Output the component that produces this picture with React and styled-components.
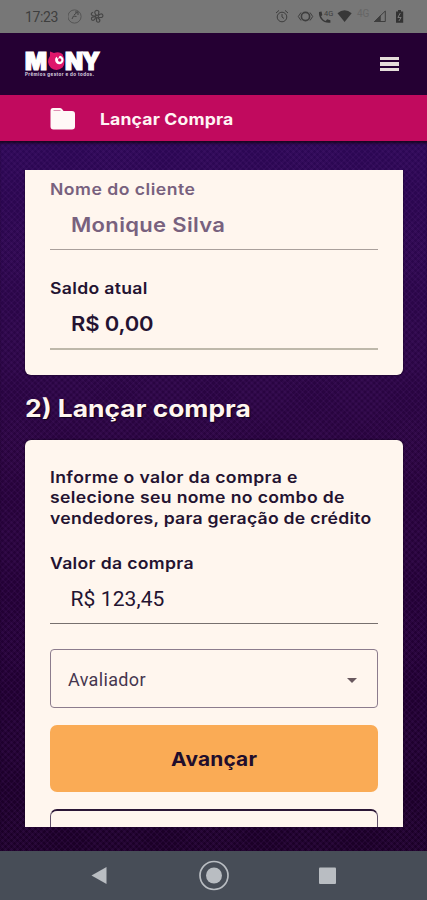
import React from 'react'
import styled, { createGlobalStyle } from 'styled-components'

const GlobalStyle = createGlobalStyle`
  * {
    box-sizing: border-box;
  }

  body {
    margin: 0;
    font-family: Inter, 'Open Sans', sans-serif;
  }
`

const Screen = styled.div`
  display: flex;
  flex-direction: column;
  width: 427px;
  height: 900px;
  overflow: hidden;
`

const StatusBar = styled.div`
  display: flex;
  flex: none;
  align-items: center;
  height: 33px;
  background: #777;
`

const Clock = styled.span`
  width: 43px;
  margin-left: 25px;
  color: #3e3e3e;
  font: 400 14px/18px Roboto, sans-serif;
  letter-spacing: -0.35px;
`

const StatusIcons = styled.svg`
  display: block;
  flex: none;
  width: ${({ $width }) => $width}px;
  height: 33px;
  margin-left: ${({ $left }) => $left || 0}px;
`

const Header = styled.header`
  display: flex;
  flex: none;
  align-items: center;
  justify-content: space-between;
  height: 62px;
  padding: 0 28px 0 24px;
  background: #250033;
`

const Logo = styled.svg`
  display: block;
  width: 80px;
  height: 32px;
`

const MenuButton = styled.button`
  display: flex;
  flex-direction: column;
  gap: 2px;
  padding: 0;
  border: 0;
  background: none;
`

const MenuLine = styled.span`
  width: 19px;
  height: 3.5px;
  background: #e5ddda;
`

const TitleBar = styled.div`
  display: flex;
  flex: none;
  align-items: center;
  gap: 25px;
  height: 46px;
  padding: 2px 0 0 50px;
  background: #c10a5e;
  color: #fff4f4;
`

// Inter is narrower than the brand face, so its glyphs are widened
const Wide = styled.span`
  display: ${({ $inline }) => ($inline ? 'inline-block' : 'block')};
  transform: scaleX(1.1);
  transform-origin: ${({ $inline }) => ($inline ? 'center' : 'left')};
  letter-spacing: ${({ $spacing }) => $spacing || 0}px;
  white-space: nowrap;
`

const PageTitle = styled.h1`
  margin: 0;
  font-size: 16px;
  line-height: 22px;
  font-weight: 700;
`

const Content = styled.main`
  flex: none;
  height: 710px;
  padding: 28.5px 23px 24px 24px;
  background:
    repeating-linear-gradient(45deg, rgba(120, 60, 160, 0.08) 0 1.8px, transparent 1.8px 4.2px),
    repeating-linear-gradient(-45deg, rgba(120, 60, 160, 0.08) 0 1.8px, transparent 1.8px 4.2px),
    linear-gradient(#2c0755 0%, #2b0649 22%, #28033c 45%, #220034 70%, #1b0027 100%);
  box-shadow: inset 0 3px 3px -1px #17051e;
`

const Scroll = styled.div`
  height: 657px;
  padding: 0 1px;
  overflow: hidden;
`

const Card = styled.section`
  padding: ${({ $top }) => $top}px 25px 0;
  height: ${({ $height }) => $height}px;
  border-radius: ${({ $clipped }) => ($clipped ? '0 0 6px 6px' : '6px 6px 0 0')};
  background: #fff6ee;
  box-shadow: 0 0 2px #0c0014;
  color: #241331;
`

const Label = styled.div`
  color: ${({ $muted }) => ($muted ? '#78617e' : '#241331')};
  font-size: 16px;
  line-height: 20px;
  font-weight: 600;
`

const Value = styled.div`
  height: ${({ $height }) => $height}px;
  margin-bottom: ${({ $after }) => $after}px;
  padding: ${({ $top }) => $top}px 0 0 20.5px;
  border-bottom: ${({ $line }) => $line};
  color: ${({ $muted }) => ($muted ? '#78617e' : '#241331')};
  font-size: 20px;
  line-height: 26px;
  font-weight: 600;
`

const Amount = styled(Value)`
  font-family: Roboto, sans-serif;
  font-size: 21px;
  font-weight: 400;
  letter-spacing: 0.1px;
`

const SectionTitle = styled.h2`
  height: 65px;
  margin: 0;
  padding-top: 19px;
  color: #fff6f0;
  font-size: 24px;
  line-height: 30px;
  font-weight: 700;
  text-shadow: 1px 1px 1px #12001c;
`

const Intro = styled.p`
  margin: 0 0 25px;
  font-size: 16px;
  line-height: 20.5px;
  font-weight: 600;
`

const Select = styled.div`
  display: flex;
  align-items: center;
  justify-content: space-between;
  height: 59px;
  margin-bottom: 17px;
  padding: 3px 20px 0 17px;
  border: 1px solid #8c7c8d;
  border-radius: 4px;
  color: #46364e;
  font: 400 18px/24px Roboto, sans-serif;
  letter-spacing: 0.35px;
`

const Submit = styled.button`
  display: block;
  width: 100%;
  height: 67px;
  margin-bottom: 17px;
  padding: 3px 0 0;
  border: 0;
  border-radius: 7px;
  background: #faab55;
  color: #210d2c;
  font: 700 19px/26px Inter, sans-serif;
`

const Secondary = styled.div`
  height: 60px;
  border: 1px solid #62516a;
  border-top: 2px solid #2b1636;
  border-radius: 7px;
`

const NavBar = styled.nav`
  display: flex;
  flex: none;
  height: 49px;
  background: #474d57;
`

const App = () => {
  return (
    <Screen>
      <GlobalStyle />
      <StatusBar>
        <Clock>17:23</Clock>
        <StatusIcons $width={38} viewBox="0 0 38 33" fill="none" stroke="#454545" strokeWidth="1">
          <circle cx="6.5" cy="16.5" r="6.6" stroke="#555" />
          <path d="M4 19l1.500-3 3 .5M6 15l3.500-3M7 12h3v3" />
          <g transform="translate(29 16.5) scale(.95)" strokeWidth="1.2">
            <circle r="1.5" />
            <path d="M-1-1.500C-5-6 1-8 2-5L1.500-1.500M1.500-1C5-5 8-1 5 1L1.500 1M1 1.500C5 4 2 8-.5 5L-.5 1.500M-1.500 1C-3 6-7 4-5.500 1L-1.500 0M-1.500-.5C-7 0-7-4-4-4.500" />
          </g>
        </StatusIcons>
        <StatusIcons $width={137} $left={167} viewBox="0 0 137 33" fill="none" stroke="#3e3e3e">
          <circle cx="9" cy="17" r="4.8" />
          <path d="M9 14v3l2 1.5M3 13l3-2.6M15 13l-3-2.6" />
          <circle cx="32.5" cy="16.5" r="4.1" strokeWidth="1.6" />
          <path d="M28 12.5 25.3 16.5l2.7 4M37 12.5l2.7 4-2.7 4" />
          <path
            d="M46 12l2.500-.5.8 3.500-1.300 1.300c1 2.300 2.500 3.800 4.600 4.700l1.600-1.700 3.200 1v2.400c-6.700 1.100-12.200-4.400-11.400-10.700z"
            fill="#373737"
            stroke="none"
          />
          <text x="51" y="15.5" fill="#3e3e3e" stroke="none" fontFamily="Roboto" fontSize="7.5">4G</text>
          <path d="M64.5 13.2q7-6 14.2 0l-7.1 8.8z" fill="#373737" stroke="none" />
          <text x="84" y="17" fill="#666" stroke="none" fontFamily="Roboto" fontSize="10">4G</text>
          <path d="M101.5 21.5h10.8V11z" />
          <path d="M101.5 21.5h5.7v-5.7z" fill="#3e3e3e" />
          <path d="M123 11.5h2v-1.6h3v1.6h2.2v11.2h-7.2z" fill="#333" stroke="none" />
          <path d="M127.3 13l-2.4 4.5h3.2L125.9 21" stroke="#777" />
        </StatusIcons>
      </StatusBar>
      <Header>
        <Logo viewBox="0 0 80 32" fill="#fff">
          <g fontFamily="Inter" fontWeight="900" fontSize="24" stroke="#fff" strokeWidth="1.2">
            <text x="1" y="21.5" textLength="22" lengthAdjust="spacingAndGlyphs">M</text>
            <text x="41" y="21.5" textLength="18" lengthAdjust="spacingAndGlyphs">N</text>
            <text x="58" y="21.5" textLength="18" lengthAdjust="spacingAndGlyphs">Y</text>
          </g>
          <path d="M26 3.500l4 1.500q5-2 8.500 1Q42.500 14 38.500 19.500 33 24 27 20 21.500 14 26 8z" fill="#df176b" />
          <circle cx="35.3" cy="12" r="4.2" />
          <circle cx="35.7" cy="12" r="1.7" fill="#c20f5e" />
          <path d="M31 6.500l5 .5-2 4z" fill="#df176b" />
          <text x="1" y="27.8" fill="#ddd3e0" fontFamily="Inter" fontSize="4.5" fontWeight="700" textLength="69">
            Prêmios gestor e do todos.
          </text>
        </Logo>
        <MenuButton aria-label="Menu">
          <MenuLine />
          <MenuLine />
          <MenuLine />
        </MenuButton>
      </Header>
      <TitleBar>
        <svg width="25" height="22" viewBox="0 0 25 22" fill="#fff8f7">
          <path d="M3 0h7q1 0 2 1l1.5 2H22q3 0 3 3v12.500q0 3-3 3H3.500q-3 0-3-3V3q0-3 2.500-3z" />
          <path d="M3.500 2.500h7" stroke="#df8fb2" />
        </svg>
        <PageTitle>
          <Wide $spacing={0.15}>Lançar Compra</Wide>
        </PageTitle>
      </TitleBar>
      <Content>
        <Scroll>
          <Card $clipped $top={9} $height={205}>
            <Label $muted>
              <Wide $spacing={0.45}>Nome do cliente</Wide>
            </Label>
            <Value $muted $top={13} $height={51} $after={28} $line="1px solid #aaa09c">
              <Wide $spacing={0.3}>Monique Silva</Wide>
            </Value>
            <Label>
              <Wide $spacing={0.3}>Saldo atual</Wide>
            </Label>
            <Value $top={13} $height={52} $after={0} $line="2px solid #beb8aa">
              <Wide $spacing={-0.15}>R$ 0,00</Wide>
            </Value>
          </Card>
          <SectionTitle>
            <Wide>2) Lançar compra</Wide>
          </SectionTitle>
          <Card $top={27} $height={387}>
            <Intro>
              <Wide $spacing={0.33}>Informe o valor da compra e</Wide>
              <Wide $spacing={0.33}>selecione seu nome no combo de</Wide>
              <Wide $spacing={0.23}>vendedores, para geração de crédito</Wide>
            </Intro>
            <Label>
              <Wide $spacing={0.3}>Valor da compra</Wide>
            </Label>
            <Amount $top={13} $height={51} $after={25} $line="1px solid #77706e">
              R$ 123,45
            </Amount>
            <Select>
              Avaliador
              <svg width="10" height="5" viewBox="0 0 10 5" fill="#69585e">
                <path d="M0 0h10L5 5z" />
              </svg>
            </Select>
            <Submit>
              <Wide $inline $spacing={0.15}>Avançar</Wide>
            </Submit>
            <Secondary />
          </Card>
        </Scroll>
      </Content>
      <NavBar>
        <svg width="427" height="49" viewBox="0 0 427 49" fill="#b9bdc2">
          <path d="M91.500 24.500 106.500 16v17z" />
          <circle cx="214" cy="24.500" r="14" fill="none" stroke="#b9bdc2" strokeWidth="1.700" />
          <circle cx="214" cy="24.500" r="8" />
          <rect x="319" y="16.500" width="17" height="16.500" rx="1" />
        </svg>
      </NavBar>
    </Screen>
  )
}

export default App
